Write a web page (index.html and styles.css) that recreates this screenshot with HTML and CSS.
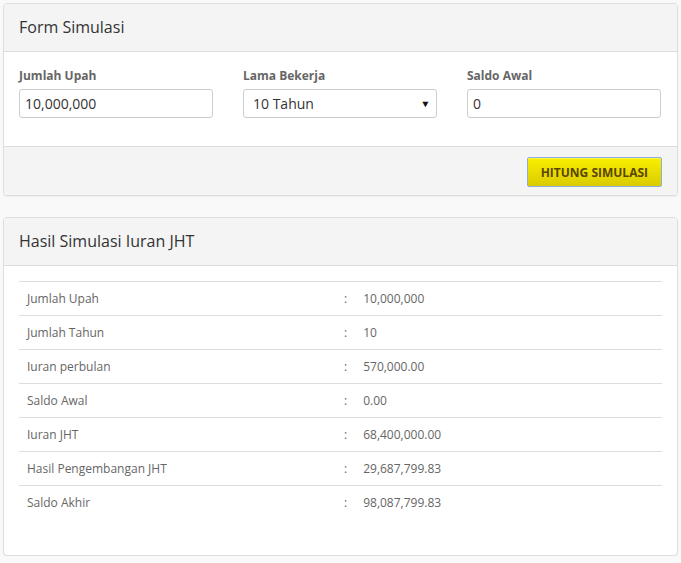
FILE: index.html
```html
<!DOCTYPE html>
<html>
<head>
<meta charset="utf-8">
<link rel="stylesheet" href="styles.css">
</head>
<body>
<div class="panel">
  <div class="panel-heading">Form Simulasi</div>
  <div class="panel-body form-body">
    <div class="field">
      <label class="label">Jumlah Upah</label>
      <div class="input">10,000,000</div>
    </div>
    <div class="field">
      <label class="label">Lama Bekerja</label>
      <div class="input select"><span class="sel-text">10 Tahun</span><span class="caret">▼</span></div>
    </div>
    <div class="field">
      <label class="label">Saldo Awal</label>
      <div class="input">0</div>
    </div>
  </div>
  <div class="panel-footer">
    <button class="btn">HITUNG SIMULASI</button>
  </div>
</div>

<div class="panel second">
  <div class="panel-heading">Hasil Simulasi Iuran JHT</div>
  <div class="panel-body">
    <table class="result">
      <tr><td class="c1">Jumlah Upah</td><td class="c2">:</td><td>10,000,000</td></tr>
      <tr><td class="c1">Jumlah Tahun</td><td class="c2">:</td><td>10</td></tr>
      <tr><td class="c1">Iuran perbulan</td><td class="c2">:</td><td>570,000.00</td></tr>
      <tr><td class="c1">Saldo Awal</td><td class="c2">:</td><td>0.00</td></tr>
      <tr><td class="c1">Iuran JHT</td><td class="c2">:</td><td>68,400,000.00</td></tr>
      <tr><td class="c1">Hasil Pengembangan JHT</td><td class="c2">:</td><td>29,687,799.83</td></tr>
      <tr><td class="c1">Saldo Akhir</td><td class="c2">:</td><td>98,087,799.83</td></tr>
    </table>
  </div>
</div>
</body>
</html>
```

FILE: styles.css
```css
html, body {
  margin: 0;
  padding: 0;
}
body {
  background: #f9f9f9;
  font-family: "Open Sans", "Liberation Sans", sans-serif;
  color: #333;
  padding: 3px 3px 0 3px;
}
.panel {
  background: #fff;
  border: 1px solid #dddddd;
  border-radius: 4px;
  box-shadow: 0 1px 1px rgba(0,0,0,0.05);
}
.panel.second {
  margin-top: 21px;
}
.panel-heading {
  background: #f4f4f4;
  border-bottom: 1px solid #dddddd;
  border-radius: 3px 3px 0 0;
  padding: 15px 15px;
  font-size: 16px;
  line-height: 17px;
  color: #333;
}
.panel-body {
  padding: 15px;
}
.form-body {
  display: grid;
  grid-template-columns: 1fr 1fr 1fr;
  column-gap: 30px;
  padding-bottom: 28px;
  padding-right: 16px;
}
.field {
  display: flex;
  flex-direction: column;
}
.label {
  font-size: 12px;
  font-weight: bold;
  color: #666;
  line-height: 17px;
  margin-bottom: 5px;
}
.input {
  height: 27px;
  border: 1px solid #cccccc;
  border-radius: 3px;
  padding: 0 5px;
  font-size: 14px;
  line-height: 27px;
  color: #333;
  background: #fff;
}
.select {
  display: flex;
  justify-content: space-between;
  align-items: center;
  padding: 0 6px 0 9px;
}
.caret {
  font-size: 9px;
  color: #111;
  line-height: 1;
  transform: scaleX(1.15);
}
.panel-footer {
  background: #f4f4f4;
  border-top: 1px solid #dddddd;
  border-radius: 0 0 3px 3px;
  padding: 10px 15px 8px 15px;
  display: flex;
  justify-content: flex-end;
}
.btn {
  height: 30px;
  padding: 0 13px;
  border: 1px solid #8fb0de;
  border-radius: 2px;
  background: linear-gradient(#f8f000, #d9cb00);
  color: #5b4500;
  font-family: "Open Sans", "Liberation Sans", sans-serif;
  font-weight: bold;
  font-size: 12px;
  box-shadow: inset 0 1px 0 rgba(255,255,255,0.3);
}
.result {
  width: 100%;
  border-collapse: collapse;
  margin-bottom: 21px;
  font-size: 12px;
  color: #666;
}
.result td {
  border-top: 1px solid #dddddd;
  padding: 8px;
  line-height: 17px;
  vertical-align: top;
}
.result .c1 {
  width: 301px;
}
.result .c2 {
  width: 3px;
}
```
